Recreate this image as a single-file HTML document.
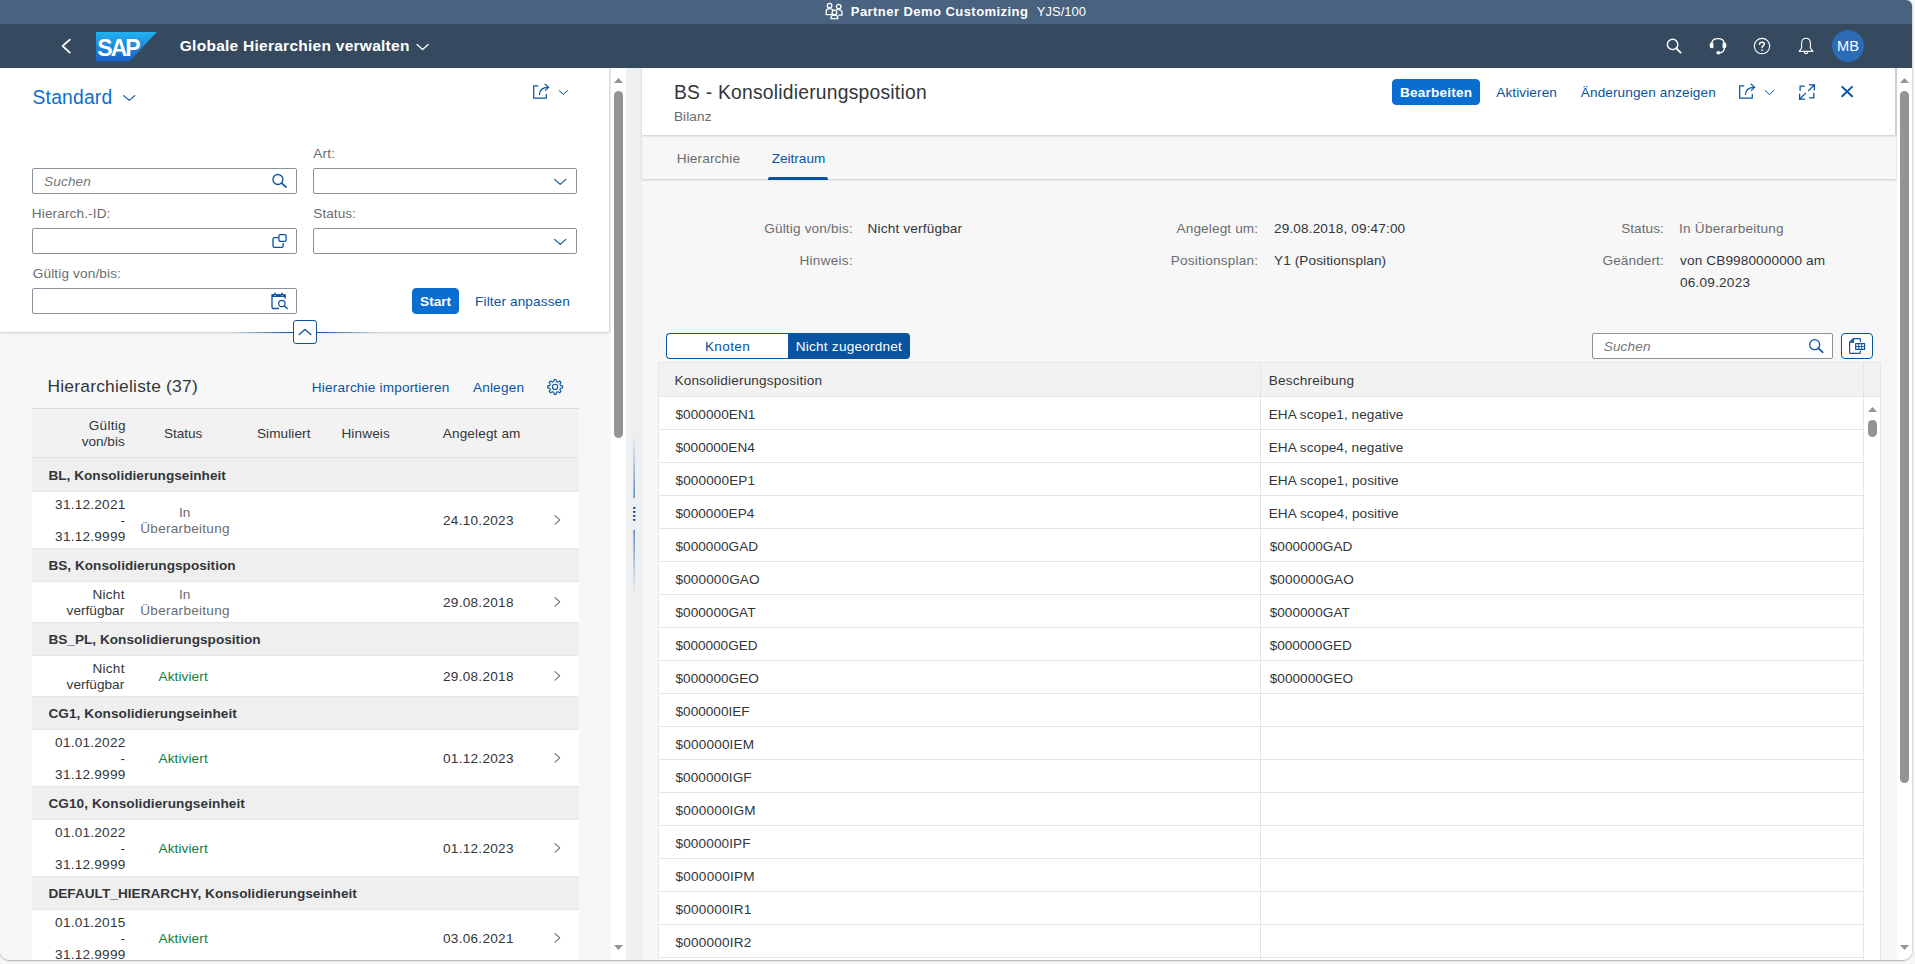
<!DOCTYPE html>
<html lang="de">
<head>
<meta charset="utf-8">
<title>Globale Hierarchien verwalten</title>
<style>
*{box-sizing:border-box;margin:0;padding:0}
html,body{width:1915px;height:964px;overflow:hidden;background:#f6f6f6}
body{font-family:"Liberation Sans",sans-serif;font-size:14px;color:#32363a;position:relative}
.a{position:absolute}
.t{position:absolute;white-space:nowrap}
#win{position:absolute;left:0;top:0;width:1912px;height:960px;overflow:hidden;border-radius:0 6px 9px 9px;background:#f7f7f7;box-shadow:0 1px 1.5px rgba(0,0,0,.22),0 0 0 1px #e4e4e4}
svg{position:absolute;overflow:visible}
.inp{position:absolute;height:26px;border:1px solid #89919a;border-radius:2px;background:#fff}
.btn{position:absolute;height:26px;border-radius:4px;background:#0a6ed1;border:1px solid #0a6ed1}
.gh{position:absolute;left:32px;width:547px;height:33px;background:#efefef;border-bottom:1px solid #e5e5e5}
.rw{position:absolute;left:32px;width:547px;background:#fff;border-bottom:1px solid #e5e5e5}
.hl{position:absolute;left:659px;width:1204px;height:1px;background:#e5e5e5}
</style>
</head>
<body>
<div id="win">
<!-- top bars -->
<div class="a" style="left:0;top:0;width:1912px;height:24px;background:#48627f"></div>
<div class="a" style="left:0;top:24px;width:1912px;height:44px;background:#354a5f"></div>

<!-- LEFT PANEL -->
<div class="a" id="lp" style="left:0;top:68px;width:610px;height:893px;background:#f7f7f7"></div>
<div class="a" style="left:0;top:68px;width:610px;height:264px;background:#fff;box-shadow:0 1px 2px rgba(0,0,0,.18)"></div>
<div class="a" style="left:609px;top:68px;width:1px;height:264px;background:#dcdcdc"></div>
<!-- left scrollbar -->
<div class="a" style="left:611px;top:68px;width:15px;height:893px;background:#fff"></div>
<div class="a" style="left:614px;top:91px;width:9px;height:347px;border-radius:4.5px;background:#949494"></div>
<svg style="left:614px;top:78px" width="9" height="5"><path d="M0 5L4.5 0L9 5Z" fill="#949494"/></svg>
<svg style="left:614px;top:945px" width="9" height="5"><path d="M0 0L4.5 5L9 0Z" fill="#949494"/></svg>
<!-- separator -->
<div class="a" style="left:626px;top:68px;width:16px;height:893px;background:#edeff0"></div>

<!-- filter fields -->
<div class="inp" style="left:32px;top:168px;width:265px"></div>
<div class="inp" style="left:313px;top:168px;width:264px"></div>
<div class="inp" style="left:32px;top:228px;width:265px"></div>
<div class="inp" style="left:313px;top:228px;width:264px"></div>
<div class="inp" style="left:32px;top:288px;width:265px"></div>
<div class="btn" style="left:412px;top:288px;width:47px"></div>
<!-- collapse -->
<div class="a" style="left:231px;top:332px;width:62px;height:1px;background:linear-gradient(90deg,rgba(8,84,160,0),#0854a0)"></div>
<div class="a" style="left:317px;top:332px;width:62px;height:1px;background:linear-gradient(90deg,#0854a0,rgba(8,84,160,0))"></div>
<div class="a" style="left:293px;top:320px;width:24px;height:24px;background:#fff;border:1px solid #0854a0;border-radius:3px"></div>

<!-- left table -->
<div class="a" style="left:32px;top:408px;width:547px;height:50px;background:#f2f2f2;border-top:1px solid #d9d9d9;border-bottom:1px solid #e5e5e5"></div>
<div class="gh" style="top:458px;height:34px"></div>
<div class="rw" style="top:492px;height:57px"></div>
<div class="gh" style="top:549px"></div>
<div class="rw" style="top:582px;height:41px"></div>
<div class="gh" style="top:623px"></div>
<div class="rw" style="top:656px;height:41px"></div>
<div class="gh" style="top:697px"></div>
<div class="rw" style="top:730px;height:57px"></div>
<div class="gh" style="top:787px"></div>
<div class="rw" style="top:820px;height:57px"></div>
<div class="gh" style="top:877px"></div>
<div class="rw" style="top:910px;height:57px"></div>

<!-- RIGHT PANEL -->
<div class="a" style="left:642px;top:68px;width:1255px;height:893px;background:#f7f7f7"></div>
<div class="a" style="left:642px;top:135px;width:1254px;height:44px;background:#f7f7f7;box-shadow:0 1px 2px rgba(0,0,0,.18)"></div>
<div class="a" style="left:642px;top:68px;width:1254px;height:67px;background:#fff;box-shadow:0 1px 2px rgba(0,0,0,.18)"></div>
<div class="a" style="left:1895px;top:68px;width:2px;height:67px;background:#cfcfcf"></div>
<div class="a" style="left:1897px;top:68px;width:15px;height:893px;background:#fff"></div>
<div class="a" style="left:1900px;top:91px;width:9px;height:692px;border-radius:4.5px;background:#949494"></div>
<svg style="left:1900px;top:78px" width="9" height="5"><path d="M0 5L4.5 0L9 5Z" fill="#949494"/></svg>
<svg style="left:1900px;top:945px" width="9" height="5"><path d="M0 0L4.5 5L9 0Z" fill="#949494"/></svg>

<div class="btn" style="left:1392px;top:79px;width:88px"></div>
<div class="a" style="left:768px;top:177px;width:60px;height:3px;background:#0854a0;border-radius:2px 2px 0 0"></div>

<!-- segmented -->
<div class="a" style="left:666px;top:333px;width:122px;height:26px;background:#fff;border:1px solid #0854a0;border-right:none;border-radius:4px 0 0 4px"></div>
<div class="a" style="left:788px;top:333px;width:122px;height:26px;background:#0854a0;border-radius:0 4px 4px 0"></div>
<div class="inp" style="left:1592px;top:333px;width:241px"></div>
<div class="a" style="left:1841px;top:333px;width:32px;height:26px;background:#fff;border:1px solid #0854a0;border-radius:4px"></div>

<!-- right table -->
<div class="a" style="left:659px;top:363px;width:1221px;height:598px;background:#fff"></div>
<div class="a" style="left:658px;top:362px;width:1223px;height:35px;background:#f2f2f2;border:1px solid #e5e5e5"></div>
<div class="a" style="left:658px;top:362px;width:1px;height:599px;background:#e5e5e5"></div>
<div class="a" style="left:1260px;top:363px;width:1px;height:598px;background:#e5e5e5"></div>
<div class="a" style="left:1863px;top:363px;width:1px;height:598px;background:#e5e5e5"></div>
<div class="a" style="left:1880px;top:363px;width:1px;height:598px;background:#e5e5e5"></div>
<div class="hl" style="top:429px"></div>
<div class="hl" style="top:462px"></div>
<div class="hl" style="top:495px"></div>
<div class="hl" style="top:528px"></div>
<div class="hl" style="top:561px"></div>
<div class="hl" style="top:594px"></div>
<div class="hl" style="top:627px"></div>
<div class="hl" style="top:660px"></div>
<div class="hl" style="top:693px"></div>
<div class="hl" style="top:726px"></div>
<div class="hl" style="top:759px"></div>
<div class="hl" style="top:792px"></div>
<div class="hl" style="top:825px"></div>
<div class="hl" style="top:858px"></div>
<div class="hl" style="top:891px"></div>
<div class="hl" style="top:924px"></div>
<div class="hl" style="top:957px"></div>
<div class="a" style="left:1868px;top:420px;width:9px;height:17px;border-radius:4.5px;background:#949494"></div>
<svg style="left:1868px;top:407px" width="9" height="5"><path d="M0 5L4.5 0L9 5Z" fill="#949494"/></svg>

<svg style="left:0;top:0" width="1912" height="961" viewBox="0 0 1912 961" fill="none" stroke-linecap="round" stroke-linejoin="round">
<!-- topbar people icon -->
<g stroke="#fff" stroke-width="1.3">
<circle cx="829.6" cy="5.6" r="2.3"/><circle cx="838.7" cy="6.6" r="2.3"/><circle cx="834.4" cy="12.4" r="2.3"/>
<path d="M832.6 14.6H826.2V11.2C826.2 9.6 827.6 8.6 829.6 8.6C831.2 8.6 832.2 9.2 832.8 10.2"/>
<path d="M837 9.6H838.7C840.8 9.6 842 10.8 842 12.6V15.2H838.8"/>
<path d="M831 18.6V17.6C831 16 832.4 15.2 834.4 15.2C836.4 15.2 837.8 16 837.8 17.6V18.6Z"/>
</g>
<!-- back arrow -->
<path d="M69.8 39.6L62.6 46L69.8 52.6" stroke="#fff" stroke-width="1.7"/>
<!-- SAP logo -->
<defs><linearGradient id="sg" x1="0" y1="0" x2="0" y2="1"><stop offset="0" stop-color="#22b2f0"/><stop offset="1" stop-color="#1b5fc8"/></linearGradient></defs>
<path d="M96 32H156.8L129.6 61.5H96Z" fill="url(#sg)" stroke="none"/>
<!-- title chevron -->
<path d="M417 44.4L422.6 49.6L428.2 44.4" stroke="#fff" stroke-width="1.3"/>
<!-- shell search -->
<g stroke="#fff" stroke-width="1.4"><circle cx="1672.6" cy="44.4" r="5.2"/><path d="M1676.4 48.4L1680.6 52.6" stroke-width="1.8"/></g>
<!-- headset -->
<g stroke="#fff" stroke-width="1.2">
<path d="M1711.6 43.4C1712 40.4 1714.4 38.6 1718 38.6C1721.6 38.6 1724 40.4 1724.4 43.4"/>
<path d="M1712.8 43V47.6H1711.8C1710.8 47.6 1710.2 46.8 1710.2 45.3C1710.2 43.8 1710.8 43 1711.8 43Z" fill="#fff"/>
<path d="M1723.2 43V47.6H1724.2C1725.2 47.6 1725.8 46.8 1725.8 45.3C1725.8 43.8 1725.2 43 1724.2 43Z" fill="#fff"/>
<path d="M1724.6 47.6C1724.4 50.6 1722.6 52.4 1719.6 52.8"/>
<ellipse cx="1718.4" cy="52.8" rx="1.5" ry="1.1" fill="#fff"/>
</g>
<!-- help -->
<g stroke="#fff"><circle cx="1762" cy="46.1" r="7.7" stroke-width="1.1"/>
<path d="M1759.6 44.2C1759.6 42.8 1760.6 42.2 1762 42.2C1763.4 42.2 1764.4 43 1764.4 44.1C1764.4 45.6 1762.1 45.8 1762.1 47.6" stroke-width="1.5"/>
<path d="M1762.1 50.1V50.3" stroke-width="1.7"/></g>
<!-- bell -->
<g stroke="#fff" stroke-width="1.1">
<path d="M1799.2 51.4L1801.6 48V43.4C1801.6 40.4 1803.4 38.3 1806 38.3C1808.6 38.3 1810.4 40.4 1810.4 43.4V48L1812.9 51.4Z"/>
<path d="M1804.2 52.2C1804.4 53.2 1805 53.7 1806 53.7C1807 53.7 1807.6 53.2 1807.8 52.2" />
</g>
<!-- avatar -->
<circle cx="1848" cy="46" r="16" fill="#2c6cb7" stroke="none"/>

<!-- Standard chevron -->
<path d="M123.6 95.6L129.2 100.4L134.8 95.6" stroke="#0854a0" stroke-width="1.2"/>
<!-- share left -->
<g stroke="#0854a0" stroke-width="1.25">
<path d="M537.8 85.8H533.7V98.1H546.3V94.4"/>
<path d="M539.5 94.6C539.6 90.4 542.4 87.6 548.2 87.4"/>
<path d="M545.2 84.2L548.6 87.4L545.4 90.4"/>
</g>
<path d="M559.2 90.6L563.4 94.4L567.6 90.6" stroke="#0854a0" stroke-width="1"/>
<!-- share right -->
<g transform="translate(1206,0)"><g stroke="#0854a0" stroke-width="1.25">
<path d="M537.8 85.8H533.7V98.1H546.3V94.4"/>
<path d="M539.5 94.6C539.6 90.4 542.4 87.6 548.2 87.4"/>
<path d="M545.2 84.2L548.6 87.4L545.4 90.4"/>
</g></g>
<path d="M1765.2 90.6L1769.5 94.6L1773.8 90.6" stroke="#0854a0" stroke-width="1"/>
<!-- fullscreen -->
<g stroke="#0854a0" stroke-width="1.3">
<path d="M1804.2 86.2H1800.1V90.4"/><path d="M1813.8 93.4V97.8H1809.6"/>
<path d="M1809.4 84.8H1814.4V89.8"/><path d="M1814.2 85L1808.6 90.6"/>
<path d="M1799.6 94.2V99.2H1804.6"/><path d="M1799.8 99L1805.4 93.4"/>
</g>
<!-- close -->
<path d="M1842.2 86.9L1852 96.3M1852 86.9L1842.2 96.3" stroke="#0854a0" stroke-width="2"/>

<!-- input search icon left -->
<g stroke="#0854a0" stroke-width="1.3"><circle cx="277.9" cy="179.5" r="5"/><path d="M281.7 183.2L286 187.1" stroke-width="1.7"/></g>
<g transform="translate(1536.8,165.2)"><g stroke="#0854a0" stroke-width="1.3"><circle cx="277.9" cy="179.5" r="5"/><path d="M281.7 183.2L286 187.1" stroke-width="1.7"/></g></g>
<!-- select chevrons -->
<path d="M554.6 179.4L560.2 184.4L565.8 179.4" stroke="#0854a0" stroke-width="1.2"/>
<g transform="translate(0,60)"><path d="M554.6 179.4L560.2 184.4L565.8 179.4" stroke="#0854a0" stroke-width="1.2"/></g>
<!-- value help -->
<g stroke="#0854a0" stroke-width="1.3">
<rect x="278.9" y="234.7" width="7.2" height="6.6" rx="1.2"/>
<path d="M277.4 237.7H274.2C273.5 237.7 273 238.2 273 238.9V246.1C273 246.8 273.5 247.3 274.2 247.3H281.9C282.6 247.3 283.1 246.8 283.1 246.1V243.4"/>
</g>
<!-- calendar search -->
<g stroke="#0854a0" stroke-width="1.3">
<path d="M271.4 294.1H285.8V297H271.4Z" fill="#0854a0" stroke="none"/>
<path d="M275 293.2V294.4M282 293.2V294.4" stroke-width="1.6"/>
<path d="M274.4 295.6H275.6M281.4 295.6H282.6" stroke="#8db5e2" stroke-width="0.9"/>
<path d="M272 297V307.3C272 308 272.5 308.5 273.2 308.5H278.5"/>
<path d="M285.1 297V298.3"/>
<circle cx="281.9" cy="303.5" r="3.2" stroke-width="1.2"/><path d="M284.4 306L287.2 308.6" stroke-width="1.4"/>
</g>
<!-- collapse chevron -->
<path d="M299.2 334.6L305 329.6L310.8 334.6" stroke="#0854a0" stroke-width="1.3"/>
<!-- gear -->
<g stroke="#0854a0" stroke-width="1.1">
<circle cx="555.1" cy="386.9" r="2.6"/>
<path d="M560.55 385.59L562.53 385.90L562.53 387.90L560.55 388.21L559.87 389.83L561.06 391.45L559.65 392.86L558.03 391.67L556.41 392.35L556.10 394.33L554.10 394.33L553.79 392.35L552.17 391.67L550.55 392.86L549.14 391.45L550.33 389.83L549.65 388.21L547.67 387.90L547.67 385.90L549.65 385.59L550.33 383.97L549.14 382.35L550.55 380.94L552.17 382.13L553.79 381.45L554.10 379.47L556.10 379.47L556.41 381.45L558.03 382.13L559.65 380.94L561.06 382.35L559.87 383.97Z"/>
</g>
<!-- row chevrons -->
<g stroke="#6a6d70" stroke-width="1.1">
<path d="M555 515.6L559.8 519.9L555 524.2"/>
<g transform="translate(0,82)"><path d="M555 515.6L559.8 519.9L555 524.2"/></g><g transform="translate(0,156)"><path d="M555 515.6L559.8 519.9L555 524.2"/></g><g transform="translate(0,238)"><path d="M555 515.6L559.8 519.9L555 524.2"/></g><g transform="translate(0,328)"><path d="M555 515.6L559.8 519.9L555 524.2"/></g><g transform="translate(0,418)"><path d="M555 515.6L559.8 519.9L555 524.2"/></g>
</g>
<!-- splitter -->
<defs><linearGradient id="g1" x1="0" y1="0" x2="0" y2="1"><stop offset="0" stop-color="#0854a0" stop-opacity="0"/><stop offset="1" stop-color="#0854a0"/></linearGradient>
<linearGradient id="g2" x1="0" y1="0" x2="0" y2="1"><stop offset="0" stop-color="#0854a0"/><stop offset="1" stop-color="#0854a0" stop-opacity="0"/></linearGradient></defs>
<rect x="633.6" y="434" width="1" height="64" fill="url(#g1)" stroke="none"/>
<rect x="633.6" y="530" width="1" height="64" fill="url(#g2)" stroke="none"/>
<g fill="#0854a0" stroke="none"><rect x="633" y="507" width="2.4" height="1.8"/><rect x="633" y="511" width="2.4" height="1.8"/><rect x="633" y="515" width="2.4" height="1.8"/><rect x="633" y="519" width="2.4" height="1.8"/></g>
<!-- export icon -->
<g stroke="#0854a0" stroke-width="1.2">
<path d="M1860.4 341.6V339.4C1860.4 338.9 1860.1 338.6 1859.6 338.6H1853.2L1849.6 342.2V352.6C1849.6 353.1 1849.9 353.4 1850.4 353.4H1859.6C1860.1 353.4 1860.4 353.1 1860.4 352.6V351.2"/>
<path d="M1850.2 342.4H1853.8V338.8Z" fill="#0854a0" stroke-width="0.6"/>
<rect x="1855.7" y="343.6" width="8.9" height="5.8" stroke-width="1.2"/>
<path d="M1855.7 346.5H1864.6M1858.7 343.6V349.4M1861.7 343.6V349.4" stroke-width="0.9"/>
</g>
</svg>

<div class="t" style="left:850.80px;top:2.60px;font-size:13px;line-height:17px;letter-spacing:0.447px;color:#fff;font-weight:bold">Partner Demo Customizing</div>
<div class="t" style="left:1036.80px;top:2.60px;font-size:13px;line-height:17px;letter-spacing:0.014px;color:#fff">YJS/100</div>
<div class="t" style="left:97.30px;top:35.40px;font-size:23px;line-height:27px;letter-spacing:-1.975px;color:#fff;font-weight:bold">SAP</div>
<div class="t" style="left:179.80px;top:36.10px;font-size:15.5px;line-height:20px;letter-spacing:0.261px;color:#fff;font-weight:bold">Globale Hierarchien verwalten</div>
<div class="t" style="left:1837.12px;top:36.90px;font-size:14.6px;line-height:19px;letter-spacing:0.000px;color:#fff">MB</div>
<div class="t" style="left:32.50px;top:85.90px;font-size:19.3px;line-height:23px;letter-spacing:0.210px;color:#0a6ed1">Standard</div>
<div class="t" style="left:313.30px;top:144.90px;font-size:13.6px;line-height:18px;letter-spacing:0.176px;color:#6a6d70">Art:</div>
<div class="t" style="left:44.10px;top:172.90px;font-size:13.6px;line-height:18px;letter-spacing:0.131px;color:#74777a;font-style:italic">Suchen</div>
<div class="t" style="left:31.80px;top:204.90px;font-size:13.6px;line-height:18px;letter-spacing:0.128px;color:#6a6d70">Hierarch.-ID:</div>
<div class="t" style="left:313.30px;top:204.90px;font-size:13.6px;line-height:18px;letter-spacing:0.044px;color:#6a6d70">Status:</div>
<div class="t" style="left:32.80px;top:264.70px;font-size:13.6px;line-height:18px;letter-spacing:0.139px;color:#6a6d70">Gültig von/bis:</div>
<div class="t" style="left:420.10px;top:293.00px;font-size:13.6px;line-height:18px;letter-spacing:-0.011px;color:#fff;font-weight:bold">Start</div>
<div class="t" style="left:475.10px;top:293.00px;font-size:13.6px;line-height:18px;letter-spacing:0.130px;color:#0854a0">Filter anpassen</div>
<div class="t" style="left:47.50px;top:375.80px;font-size:17.4px;line-height:21px;letter-spacing:0.224px;color:#32363a">Hierarchieliste (37)</div>
<div class="t" style="left:311.80px;top:378.80px;font-size:13.6px;line-height:18px;letter-spacing:0.178px;color:#0854a0">Hierarchie importieren</div>
<div class="t" style="left:472.90px;top:378.80px;font-size:13.6px;line-height:18px;letter-spacing:0.195px;color:#0854a0">Anlegen</div>
<div class="t" style="left:88.80px;top:416.50px;font-size:13.6px;line-height:18px;letter-spacing:0.230px;color:#32363a">Gültig</div>
<div class="t" style="left:81.70px;top:432.50px;font-size:13.6px;line-height:18px;letter-spacing:-0.012px;color:#32363a">von/bis</div>
<div class="t" style="left:164.10px;top:424.60px;font-size:13.6px;line-height:18px;letter-spacing:-0.068px;color:#32363a">Status</div>
<div class="t" style="left:256.90px;top:424.60px;font-size:13.6px;line-height:18px;letter-spacing:0.088px;color:#32363a">Simuliert</div>
<div class="t" style="left:341.40px;top:424.60px;font-size:13.6px;line-height:18px;letter-spacing:0.134px;color:#32363a">Hinweis</div>
<div class="t" style="left:442.80px;top:424.60px;font-size:13.6px;line-height:18px;letter-spacing:0.130px;color:#32363a">Angelegt am</div>
<div class="t" style="left:48.40px;top:466.70px;font-size:13.6px;line-height:18px;letter-spacing:0.028px;color:#32363a;font-weight:bold">BL, Konsolidierungseinheit</div>
<div class="t" style="left:55.10px;top:495.60px;font-size:13.6px;line-height:18px;letter-spacing:0.236px;color:#32363a">31.12.2021</div>
<div class="t" style="left:120.40px;top:511.60px;font-size:13.6px;line-height:18px;letter-spacing:0.000px;color:#32363a">-</div>
<div class="t" style="left:55.10px;top:527.60px;font-size:13.6px;line-height:18px;letter-spacing:0.236px;color:#32363a">31.12.9999</div>
<div class="t" style="left:178.91px;top:503.80px;font-size:13.6px;line-height:18px;letter-spacing:0.000px;color:#6a6d70">In</div>
<div class="t" style="left:140.30px;top:519.80px;font-size:13.6px;line-height:18px;letter-spacing:0.259px;color:#6a6d70">Überarbeitung</div>
<div class="t" style="left:443.00px;top:511.90px;font-size:13.6px;line-height:18px;letter-spacing:0.269px;color:#32363a">24.10.2023</div>
<div class="t" style="left:48.40px;top:556.70px;font-size:13.6px;line-height:18px;letter-spacing:0.026px;color:#32363a;font-weight:bold">BS, Konsolidierungsposition</div>
<div class="t" style="left:92.40px;top:585.70px;font-size:13.6px;line-height:18px;letter-spacing:0.276px;color:#32363a">Nicht</div>
<div class="t" style="left:66.60px;top:601.70px;font-size:13.6px;line-height:18px;letter-spacing:0.025px;color:#32363a">verfügbar</div>
<div class="t" style="left:178.91px;top:585.70px;font-size:13.6px;line-height:18px;letter-spacing:0.000px;color:#6a6d70">In</div>
<div class="t" style="left:140.30px;top:601.70px;font-size:13.6px;line-height:18px;letter-spacing:0.259px;color:#6a6d70">Überarbeitung</div>
<div class="t" style="left:443.00px;top:593.90px;font-size:13.6px;line-height:18px;letter-spacing:0.269px;color:#32363a">29.08.2018</div>
<div class="t" style="left:48.40px;top:630.70px;font-size:13.6px;line-height:18px;letter-spacing:0.025px;color:#32363a;font-weight:bold">BS_PL, Konsolidierungsposition</div>
<div class="t" style="left:92.40px;top:659.70px;font-size:13.6px;line-height:18px;letter-spacing:0.276px;color:#32363a">Nicht</div>
<div class="t" style="left:66.60px;top:675.70px;font-size:13.6px;line-height:18px;letter-spacing:0.025px;color:#32363a">verfügbar</div>
<div class="t" style="left:158.50px;top:667.90px;font-size:13.6px;line-height:18px;letter-spacing:0.104px;color:#107e3e">Aktiviert</div>
<div class="t" style="left:443.00px;top:667.90px;font-size:13.6px;line-height:18px;letter-spacing:0.269px;color:#32363a">29.08.2018</div>
<div class="t" style="left:48.40px;top:704.70px;font-size:13.6px;line-height:18px;letter-spacing:0.072px;color:#32363a;font-weight:bold">CG1, Konsolidierungseinheit</div>
<div class="t" style="left:55.10px;top:733.60px;font-size:13.6px;line-height:18px;letter-spacing:0.236px;color:#32363a">01.01.2022</div>
<div class="t" style="left:120.40px;top:749.60px;font-size:13.6px;line-height:18px;letter-spacing:0.000px;color:#32363a">-</div>
<div class="t" style="left:55.10px;top:765.60px;font-size:13.6px;line-height:18px;letter-spacing:0.236px;color:#32363a">31.12.9999</div>
<div class="t" style="left:158.50px;top:749.90px;font-size:13.6px;line-height:18px;letter-spacing:0.104px;color:#107e3e">Aktiviert</div>
<div class="t" style="left:443.00px;top:749.90px;font-size:13.6px;line-height:18px;letter-spacing:0.269px;color:#32363a">01.12.2023</div>
<div class="t" style="left:48.40px;top:794.70px;font-size:13.6px;line-height:18px;letter-spacing:0.086px;color:#32363a;font-weight:bold">CG10, Konsolidierungseinheit</div>
<div class="t" style="left:55.10px;top:823.60px;font-size:13.6px;line-height:18px;letter-spacing:0.236px;color:#32363a">01.01.2022</div>
<div class="t" style="left:120.40px;top:839.60px;font-size:13.6px;line-height:18px;letter-spacing:0.000px;color:#32363a">-</div>
<div class="t" style="left:55.10px;top:855.60px;font-size:13.6px;line-height:18px;letter-spacing:0.236px;color:#32363a">31.12.9999</div>
<div class="t" style="left:158.50px;top:839.90px;font-size:13.6px;line-height:18px;letter-spacing:0.104px;color:#107e3e">Aktiviert</div>
<div class="t" style="left:443.00px;top:839.90px;font-size:13.6px;line-height:18px;letter-spacing:0.269px;color:#32363a">01.12.2023</div>
<div class="t" style="left:48.40px;top:884.70px;font-size:13.6px;line-height:18px;letter-spacing:0.032px;color:#32363a;font-weight:bold">DEFAULT_HIERARCHY, Konsolidierungseinheit</div>
<div class="t" style="left:55.10px;top:913.60px;font-size:13.6px;line-height:18px;letter-spacing:0.236px;color:#32363a">01.01.2015</div>
<div class="t" style="left:120.40px;top:929.60px;font-size:13.6px;line-height:18px;letter-spacing:0.000px;color:#32363a">-</div>
<div class="t" style="left:55.10px;top:945.60px;font-size:13.6px;line-height:18px;letter-spacing:0.236px;color:#32363a">31.12.9999</div>
<div class="t" style="left:158.50px;top:929.90px;font-size:13.6px;line-height:18px;letter-spacing:0.104px;color:#107e3e">Aktiviert</div>
<div class="t" style="left:443.00px;top:929.90px;font-size:13.6px;line-height:18px;letter-spacing:0.269px;color:#32363a">03.06.2021</div>
<div class="t" style="left:673.90px;top:81.00px;font-size:19.3px;line-height:23px;letter-spacing:0.230px;color:#32363a">BS - Konsolidierungsposition</div>
<div class="t" style="left:673.90px;top:107.90px;font-size:13.6px;line-height:18px;letter-spacing:0.114px;color:#6a6d70">Bilanz</div>
<div class="t" style="left:1400.00px;top:84.00px;font-size:13.6px;line-height:18px;letter-spacing:0.194px;color:#fff;font-weight:bold">Bearbeiten</div>
<div class="t" style="left:1496.30px;top:84.00px;font-size:13.6px;line-height:18px;letter-spacing:0.097px;color:#0854a0">Aktivieren</div>
<div class="t" style="left:1580.80px;top:84.00px;font-size:13.6px;line-height:18px;letter-spacing:0.107px;color:#0854a0">Änderungen anzeigen</div>
<div class="t" style="left:676.70px;top:149.90px;font-size:13.6px;line-height:18px;letter-spacing:0.146px;color:#6a6d70">Hierarchie</div>
<div class="t" style="left:771.70px;top:149.90px;font-size:13.6px;line-height:18px;letter-spacing:-0.001px;color:#0854a0">Zeitraum</div>
<div class="t" style="left:764.20px;top:219.90px;font-size:13.6px;line-height:18px;letter-spacing:0.167px;color:#6a6d70">Gültig von/bis:</div>
<div class="t" style="left:867.50px;top:219.90px;font-size:13.6px;line-height:18px;letter-spacing:0.175px;color:#32363a">Nicht verfügbar</div>
<div class="t" style="left:799.50px;top:251.80px;font-size:13.6px;line-height:18px;letter-spacing:0.258px;color:#6a6d70">Hinweis:</div>
<div class="t" style="left:1176.50px;top:219.90px;font-size:13.6px;line-height:18px;letter-spacing:0.134px;color:#6a6d70">Angelegt um:</div>
<div class="t" style="left:1274.00px;top:219.90px;font-size:13.6px;line-height:18px;letter-spacing:0.140px;color:#32363a">29.08.2018, 09:47:00</div>
<div class="t" style="left:1170.70px;top:251.80px;font-size:13.6px;line-height:18px;letter-spacing:0.211px;color:#6a6d70">Positionsplan:</div>
<div class="t" style="left:1274.00px;top:251.80px;font-size:13.6px;line-height:18px;letter-spacing:0.106px;color:#32363a">Y1 (Positionsplan)</div>
<div class="t" style="left:1621.20px;top:219.90px;font-size:13.6px;line-height:18px;letter-spacing:0.044px;color:#6a6d70">Status:</div>
<div class="t" style="left:1679.10px;top:219.90px;font-size:13.6px;line-height:18px;letter-spacing:0.213px;color:#6a6d70">In Überarbeitung</div>
<div class="t" style="left:1602.50px;top:251.80px;font-size:13.6px;line-height:18px;letter-spacing:0.103px;color:#6a6d70">Geändert:</div>
<div class="t" style="left:1680.10px;top:251.80px;font-size:13.6px;line-height:18px;letter-spacing:0.121px;color:#32363a">von CB9980000000 am</div>
<div class="t" style="left:1680.10px;top:273.90px;font-size:13.6px;line-height:18px;letter-spacing:0.203px;color:#32363a">06.09.2023</div>
<div class="t" style="left:704.90px;top:337.90px;font-size:13.6px;line-height:18px;letter-spacing:0.375px;color:#0854a0">Knoten</div>
<div class="t" style="left:795.80px;top:337.90px;font-size:13.6px;line-height:18px;letter-spacing:0.220px;color:#fff">Nicht zugeordnet</div>
<div class="t" style="left:1603.70px;top:337.90px;font-size:13.6px;line-height:18px;letter-spacing:0.151px;color:#74777a;font-style:italic">Suchen</div>
<div class="t" style="left:674.40px;top:371.60px;font-size:13.6px;line-height:18px;letter-spacing:0.181px;color:#32363a">Konsolidierungsposition</div>
<div class="t" style="left:1268.70px;top:371.60px;font-size:13.6px;line-height:18px;letter-spacing:0.194px;color:#32363a">Beschreibung</div>
<div class="t" style="left:675.50px;top:405.70px;font-size:13.6px;line-height:18px;letter-spacing:0.055px;color:#32363a">$000000EN1</div>
<div class="t" style="left:1268.70px;top:405.70px;font-size:13.6px;line-height:18px;letter-spacing:0.045px;color:#32363a">EHA scope1, negative</div>
<div class="t" style="left:675.50px;top:438.70px;font-size:13.6px;line-height:18px;letter-spacing:-0.012px;color:#32363a">$000000EN4</div>
<div class="t" style="left:1268.70px;top:438.70px;font-size:13.6px;line-height:18px;letter-spacing:0.045px;color:#32363a">EHA scope4, negative</div>
<div class="t" style="left:675.50px;top:471.70px;font-size:13.6px;line-height:18px;letter-spacing:0.105px;color:#32363a">$000000EP1</div>
<div class="t" style="left:1268.70px;top:471.70px;font-size:13.6px;line-height:18px;letter-spacing:0.076px;color:#32363a">EHA scope1, positive</div>
<div class="t" style="left:675.50px;top:504.70px;font-size:13.6px;line-height:18px;letter-spacing:0.027px;color:#32363a">$000000EP4</div>
<div class="t" style="left:1268.70px;top:504.70px;font-size:13.6px;line-height:18px;letter-spacing:0.076px;color:#32363a">EHA scope4, positive</div>
<div class="t" style="left:675.50px;top:537.70px;font-size:13.6px;line-height:18px;letter-spacing:0.026px;color:#32363a">$000000GAD</div>
<div class="t" style="left:1269.70px;top:537.70px;font-size:13.6px;line-height:18px;letter-spacing:0.038px;color:#32363a">$000000GAD</div>
<div class="t" style="left:675.50px;top:570.70px;font-size:13.6px;line-height:18px;letter-spacing:0.104px;color:#32363a">$000000GAO</div>
<div class="t" style="left:1269.70px;top:570.70px;font-size:13.6px;line-height:18px;letter-spacing:0.115px;color:#32363a">$000000GAO</div>
<div class="t" style="left:675.50px;top:603.70px;font-size:13.6px;line-height:18px;letter-spacing:0.016px;color:#32363a">$000000GAT</div>
<div class="t" style="left:1269.70px;top:603.70px;font-size:13.6px;line-height:18px;letter-spacing:0.027px;color:#32363a">$000000GAT</div>
<div class="t" style="left:675.50px;top:636.70px;font-size:13.6px;line-height:18px;letter-spacing:-0.040px;color:#32363a">$000000GED</div>
<div class="t" style="left:1269.70px;top:636.70px;font-size:13.6px;line-height:18px;letter-spacing:-0.029px;color:#32363a">$000000GED</div>
<div class="t" style="left:675.50px;top:669.70px;font-size:13.6px;line-height:18px;letter-spacing:0.026px;color:#32363a">$000000GEO</div>
<div class="t" style="left:1269.70px;top:669.70px;font-size:13.6px;line-height:18px;letter-spacing:0.038px;color:#32363a">$000000GEO</div>
<div class="t" style="left:675.50px;top:702.70px;font-size:13.6px;line-height:18px;letter-spacing:0.004px;color:#32363a">$000000IEF</div>
<div class="t" style="left:675.50px;top:735.70px;font-size:13.6px;line-height:18px;letter-spacing:0.171px;color:#32363a">$000000IEM</div>
<div class="t" style="left:675.50px;top:768.70px;font-size:13.6px;line-height:18px;letter-spacing:0.059px;color:#32363a">$000000IGF</div>
<div class="t" style="left:675.50px;top:801.70px;font-size:13.6px;line-height:18px;letter-spacing:0.170px;color:#32363a">$000000IGM</div>
<div class="t" style="left:675.50px;top:834.70px;font-size:13.6px;line-height:18px;letter-spacing:0.115px;color:#32363a">$000000IPF</div>
<div class="t" style="left:675.50px;top:867.70px;font-size:13.6px;line-height:18px;letter-spacing:0.226px;color:#32363a">$000000IPM</div>
<div class="t" style="left:675.50px;top:900.70px;font-size:13.6px;line-height:18px;letter-spacing:0.198px;color:#32363a">$000000IR1</div>
<div class="t" style="left:675.50px;top:933.70px;font-size:13.6px;line-height:18px;letter-spacing:0.198px;color:#32363a">$000000IR2</div>
</div>
</body>
</html>
